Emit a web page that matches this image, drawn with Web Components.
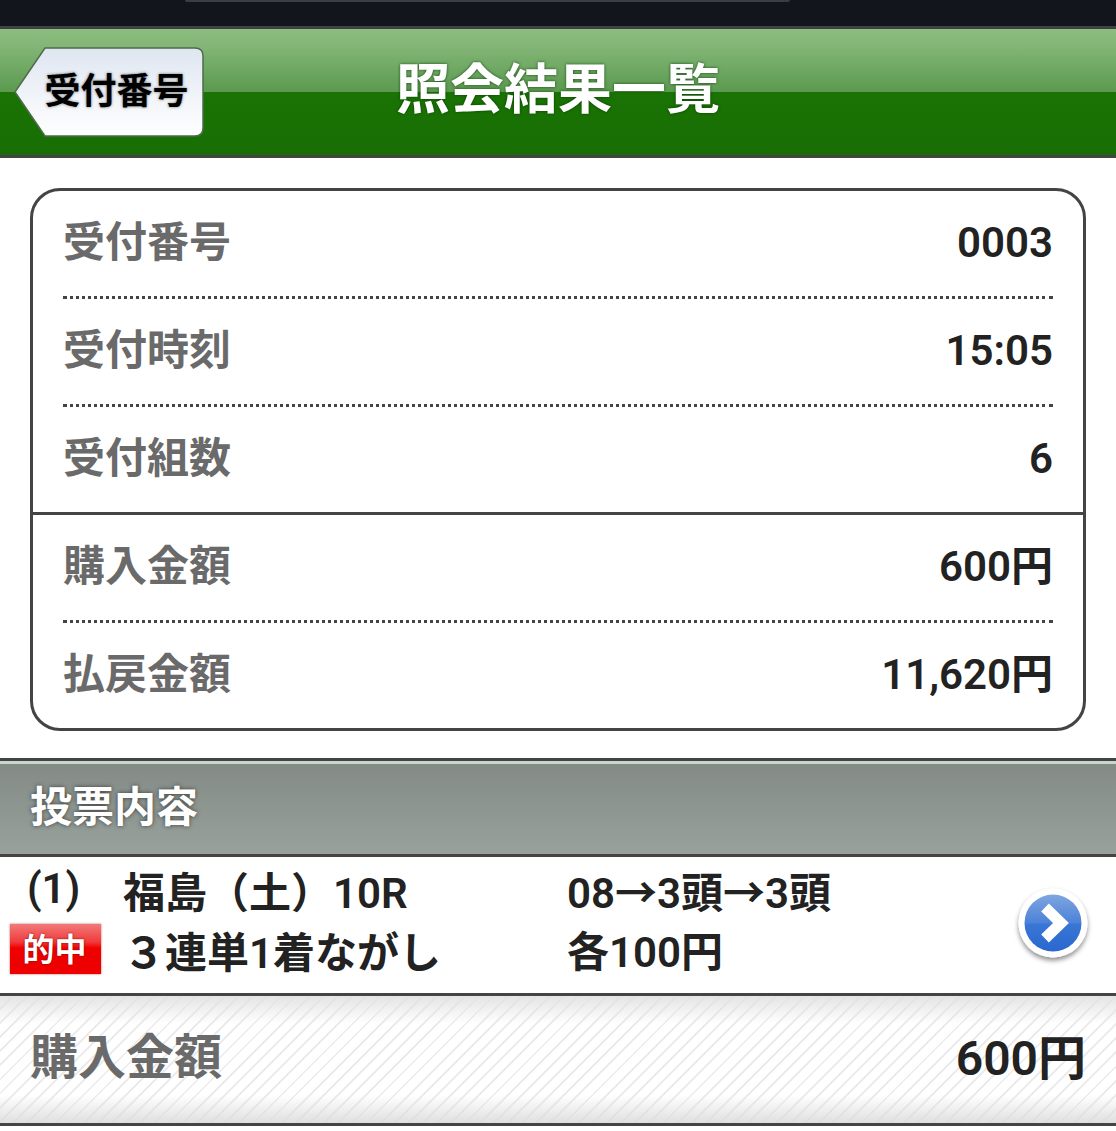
<!DOCTYPE html>
<html lang="ja"><head><meta charset="utf-8">
<style>
html,body{margin:0;padding:0;background:#fff}
body{width:1116px;height:1131px;overflow:hidden;font-family:Roboto,"Noto Sans CJK JP",sans-serif;color:#222}
</style></head><body>
<status-strip></status-strip>
<title-bar back="受付番号">照会結果一覧</title-bar>
<summary-card>
  <info-row label="受付番号" value="0003"></info-row>
  <info-row label="受付時刻" value="15:05"></info-row>
  <info-row label="受付組数" value="6" sep="solid"></info-row>
  <info-row label="購入金額" value="600円"></info-row>
  <info-row label="払戻金額" value="11,620円" sep="none"></info-row>
</summary-card>
<section-head>投票内容</section-head>
<bet-row></bet-row>
<total-bar label="購入金額" value="600円"></total-bar>
<script>
function def(name,html,init){
  customElements.define(name,class extends HTMLElement{
    constructor(){super();this.attachShadow({mode:'open'}).innerHTML=html;}
    connectedCallback(){if(init)init(this,this.shadowRoot);}
  });
}
def('status-strip',`<style>
:host{display:block;height:26px;background:#12151b;border-bottom:3px solid #3f4145;position:relative}
i{position:absolute;left:185px;width:605px;top:0;height:2px;background:#3a3d44;border-radius:0 0 8px 8px}
</style><i></i>`);
def('title-bar',`<style>
:host{display:flex;align-items:center;height:126px;border-bottom:3px solid #444;padding-left:14px;position:relative;
background:linear-gradient(#8cbd80 0,#82b576 14%,#5b9a4f 50%,#1a7304 50%,#186e04 100%)}
.back{width:190px;height:90px;display:block;position:relative;margin-top:-1px;flex:none}
.back svg{position:absolute;inset:0}
.back span{position:relative;display:flex;height:100%;align-items:center;justify-content:center;padding:0 0 8px 15px;box-sizing:border-box;
font:700 36px/1 "Noto Sans CJK JP",sans-serif;color:#000;text-shadow:0 0 3px rgba(0,0,0,.55)}
h1{margin:0 0 0 192px;font:700 54px/1 "Noto Sans CJK JP",sans-serif;color:#fff;text-shadow:0 0 3px rgba(0,50,0,.8);position:relative;top:-6px}
</style>
<div class="back"><svg width="190" height="90" viewBox="0 0 190 90"><defs><linearGradient id="g" x1="0" y1="0" x2="0" y2="1"><stop offset="0" stop-color="#dfe6f1"/><stop offset="1" stop-color="#fff"/></linearGradient></defs>
<path d="M31 1H181Q189 1 189 9V81Q189 89 181 89H31L1 45Z" fill="url(#g)" stroke="#4f6b4a" stroke-width="1.5"/></svg><span></span></div><h1><slot></slot></h1>`,
(el,r)=>{r.querySelector('.back span').textContent=el.getAttribute('back');});
def('summary-card',`<style>
:host{display:block;margin:30px 30px 27px 30px;border:3px solid #444;border-radius:30px;height:537px;overflow:hidden}
</style><slot></slot>`);
def('info-row',`<style>
:host{display:block;padding:0 30px;height:108px;box-sizing:border-box}
.r{display:flex;justify-content:space-between;align-items:center;height:105px;box-sizing:border-box;font:600 42px/1 Roboto,"Noto Sans CJK JP",sans-serif}
.l{color:#6a6a6a;font:700 42px/1 "Noto Sans CJK JP",sans-serif;position:relative;top:-5px}
.v{color:#222;position:relative;top:-1px}
.s{border-top:3px dotted #444}
:host([sep=solid]){padding:0}
:host([sep=solid]) .r{padding:0 30px}
:host([sep=solid]) .s{border-top:3px solid #444}
:host([sep=none]) .s{border:0}
</style><div class="r"><span class="l"></span><span class="v"></span></div><div class="s"></div>`,
(el,r)=>{r.querySelector('.l').textContent=el.getAttribute('label');r.querySelector('.v').textContent=el.getAttribute('value');});
def('section-head',`<style>
:host{display:flex;align-items:center;height:90px;padding:3px 0 0 30px;box-sizing:content-box;border-top:3px solid #444;border-bottom:3px solid #444;
background:linear-gradient(#c8d6cc 0 3px,#848b86 3px,#98a19b 100%);
font:700 42px/1 "Noto Sans CJK JP",sans-serif;color:#fff;text-shadow:0 0 4px rgba(40,40,40,.8)}
span{position:relative;top:-5px}
</style><span><slot></slot></span>`);
def('bet-row',`<style>
:host{display:grid;grid-template-columns:113px 444px 1fr 98px;grid-template-rows:66px 70px;padding-left:10px;height:136px;
font:600 42px/1 Roboto,"Noto Sans CJK JP",sans-serif;color:#222;position:relative;border-bottom:3px solid #444}
div{display:flex;align-items:center;white-space:nowrap}
.n{padding-left:17px;padding-bottom:2px}
.a{padding-top:8px}
.b{padding-top:8px}
.c{padding-bottom:9px}
.d{padding-bottom:11px}
.badge{width:91px;height:50px;box-sizing:border-box;margin-top:1px;padding:0 2px 5px 0;justify-content:center;background:linear-gradient(#f27a7a 0,#f03a3a 36%,#f00000 48%,#ee0000 100%);box-shadow:0 0 2px rgba(120,0,0,.6);
color:#fff;font:700 32px/1 "Noto Sans CJK JP",sans-serif;text-shadow:0 0 2px #700}
.go{grid-column:4;grid-row:1/3;justify-content:flex-start;padding-left:0}
svg{display:block;margin-left:-5px;margin-top:0}
</style>
<div class="n">(1)</div><div class="a">福島（土）10R</div><div class="b">08→3頭→3頭</div>
<div class="go"><svg width="80" height="84" viewBox="0 0 80 84"><defs>
<linearGradient id="b" x1="0" y1="0" x2="0" y2="1"><stop offset="0" stop-color="#7fa6e0"/><stop offset=".5" stop-color="#4b82d8"/><stop offset=".52" stop-color="#3a76d4"/><stop offset="1" stop-color="#2a68d0"/></linearGradient>
<filter id="f" x="-20%" y="-20%" width="140%" height="140%"><feDropShadow dx="0" dy="3" stdDeviation="2.5" flood-color="#000" flood-opacity=".45"/></filter></defs>
<circle cx="40" cy="40" r="34.5" fill="#fff" filter="url(#f)"/><circle cx="40" cy="40" r="28.5" fill="url(#b)"/>
<path d="M32 24.5L48 40L32 55.5" fill="none" stroke="#fff" stroke-width="11"/></svg></div>
<div class="badge">的中</div>
<div class="c">３連単1着ながし</div><div class="d">各100円</div>`);
def('total-bar',`<style>
:host{display:flex;justify-content:space-between;align-items:center;height:130px;padding:0 30px 0 30px;box-sizing:border-box;border-bottom:3px solid #444;
background:linear-gradient(rgba(225,225,225,.9) 0,rgba(255,255,255,0) 22%,rgba(255,255,255,0) 78%,rgba(220,220,220,.9) 100%),
repeating-linear-gradient(135deg,#fff 0 8px,#ececec 8px 10px);
font:600 48px/1 Roboto,"Noto Sans CJK JP",sans-serif}
.l{color:#6a6a6a;font-weight:700;font-family:"Noto Sans CJK JP",sans-serif;position:relative;top:-7px}
.v{color:#222;position:relative;top:-1px}
</style><span class="l"></span><span class="v"></span>`,
(el,r)=>{r.querySelector('.l').textContent=el.getAttribute('label');r.querySelector('.v').textContent=el.getAttribute('value');});
</script>
</body></html>
